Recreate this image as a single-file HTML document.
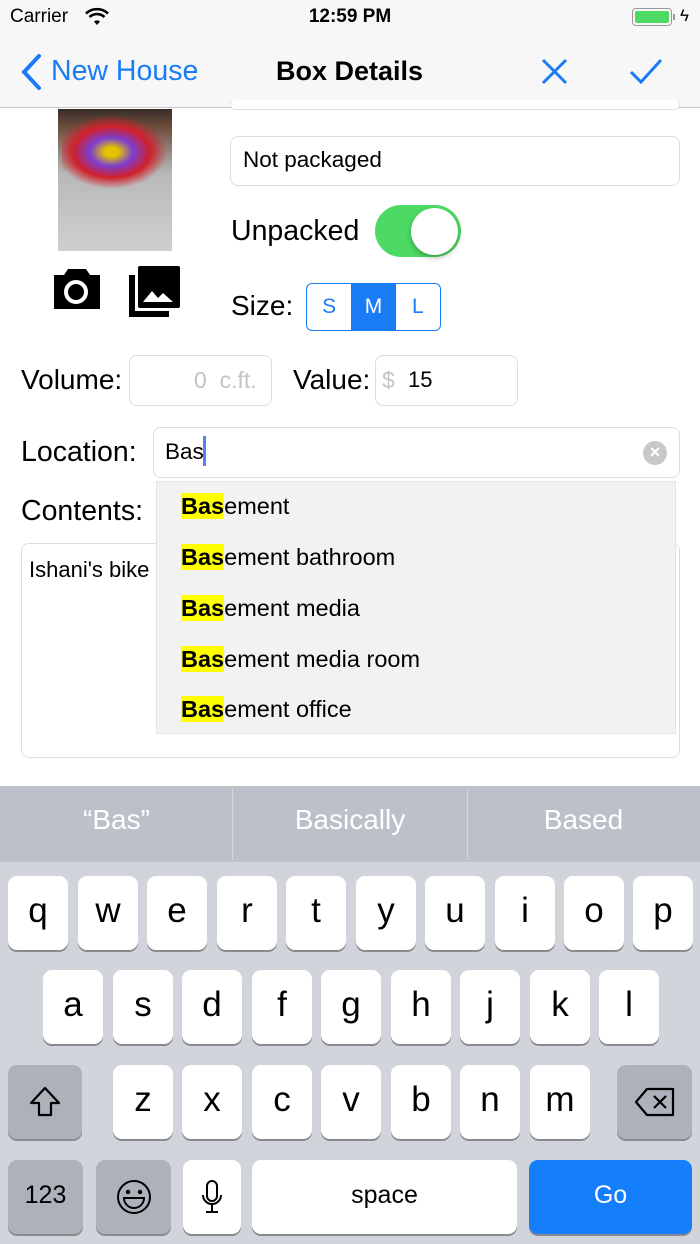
<!DOCTYPE html><html><head><style>
*{margin:0;padding:0;box-sizing:border-box}
body{width:700px;height:1244px;position:relative;overflow:hidden;background:#fff;font-family:"Liberation Sans",sans-serif;color:#000}
.a{position:absolute}
.f{position:absolute;border:1px solid #ddd;border-radius:8px;background:#fff}
.k{position:absolute;width:60px;height:74px;background:#fff;border-radius:9px;box-shadow:0 2px 0 #898a8d;font-size:35px;text-align:center;line-height:70px}
.g{background:#acb1ba}
.hl{background:#ff0;font-weight:bold}
.sg{position:absolute;left:181px;font-size:23.5px}
</style></head><body>
<div class="a" style="left:0;top:0;width:700px;height:108px;background:#f7f7f7;border-bottom:1px solid #c8c8cc"></div>
<div class="a" style="left:10px;top:6px;font-size:19px">Carrier</div>
<svg class="a" style="left:84px;top:7px" width="26" height="20" viewBox="0 0 26 20"><path d="M13 18l3-3.5a4.5 4.5 0 0 0-6 0z" fill="#000"/><path d="M5.5 10a11 11 0 0 1 15 0M2 6.5a16 16 0 0 1 22 0" stroke="#000" stroke-width="2.6" fill="none"/></svg>
<div class="a" style="left:0;width:700px;top:6px;text-align:center;font-size:19px;font-weight:bold">12:59 PM</div>
<div class="a" style="left:632px;top:8px;width:40px;height:18px;border:1.5px solid #999;border-radius:4px;padding:2px"><div style="background:#4cd964;height:100%;border-radius:2px"></div></div>
<div class="a" style="left:673px;top:14px;width:2px;height:6px;background:#999"></div>
<div class="a" style="left:680px;top:6px;font-size:17px">ϟ</div>
<svg class="a" style="left:20px;top:54px" width="24" height="36" viewBox="0 0 24 36"><path d="M19 2L4 18l15 16" stroke="#1a7cf5" stroke-width="4" fill="none" stroke-linecap="round"/></svg>
<div class="a" style="left:51px;top:55px;font-size:28.5px;color:#1a7cf5">New House</div>
<div class="a" style="left:276px;top:56px;font-size:27px;font-weight:bold">Box Details</div>
<svg class="a" style="left:541px;top:58px" width="27" height="27"><path d="M2 2l23 23M25 2L2 25" stroke="#1a7cf5" stroke-width="3"/></svg>
<svg class="a" style="left:629px;top:58px" width="34" height="26"><path d="M2 14l10 10L32 2" stroke="#1a7cf5" stroke-width="3" fill="none"/></svg>
<div class="f" style="left:230px;top:100px;width:450px;height:10px;border-top:none"></div>
<div class="a" style="left:58px;top:109px;width:114px;height:142px;background:linear-gradient(180deg,#3a2c28 0%,#6a4b3a 12%,#b8b8b8 45%,#cfcfcf 100%)"></div>
<div class="a" style="left:62px;top:112px;width:110px;height:80px;background:radial-gradient(ellipse at 45% 50%,#e2c300 8%,#7b3fd1 25%,#d0202a 45%,transparent 65%)"></div>
<svg class="a" style="left:50px;top:265px" width="54" height="48"><path d="M4 10h10l4-6h18l4 6h10v34H4z" fill="#000"/><circle cx="26" cy="27" r="10" fill="none" stroke="#fff" stroke-width="4"/></svg>
<svg class="a" style="left:128px;top:265px" width="54" height="53"><path d="M1 10v42h40v-6H7V10z" fill="#000"/><rect x="10" y="1" width="42" height="42" rx="2" fill="#000"/><path d="M15 37l9-11 6 7 5-5 10 9z" fill="#fff"/></svg>
<div class="f" style="left:230px;top:136px;width:450px;height:50px"></div>
<div class="a" style="left:243px;top:147px;font-size:22.5px">Not packaged</div>
<div class="a" style="left:231px;top:215px;font-size:28.5px">Unpacked</div>
<div class="a" style="left:375px;top:205px;width:86px;height:52px;border-radius:26px;background:#4cd964"></div>
<div class="a" style="left:411px;top:208px;width:47px;height:47px;border-radius:50%;background:#fff;box-shadow:0 3px 6px rgba(0,0,0,.25)"></div>
<div class="a" style="left:231px;top:290px;font-size:28px">Size:</div>
<div class="a" style="left:306px;top:283px;width:135px;height:48px;border:1.5px solid #1a7cf5;border-radius:6px;display:flex;overflow:hidden;color:#1a7cf5;font-size:21px;line-height:45px;text-align:center"><div style="flex:1">S</div><div style="flex:1;background:#1a7cf5;color:#fff">M</div><div style="flex:1">L</div></div>
<div class="a" style="left:21px;top:364px;font-size:28px">Volume:</div>
<div class="f" style="left:129px;top:355px;width:143px;height:51px"></div>
<div class="a" style="left:194px;top:367px;font-size:23px;color:#c4c4c8">0&nbsp; c.ft.</div>
<div class="a" style="left:293px;top:364px;font-size:28px">Value:</div>
<div class="f" style="left:375px;top:355px;width:143px;height:51px"></div>
<div class="a" style="left:382px;top:367px;font-size:23px;color:#c4c4c8">$</div>
<div class="a" style="left:408px;top:367px;font-size:22px">15</div>
<div class="a" style="left:21px;top:436px;font-size:28.5px">Location:</div>
<div class="f" style="left:153px;top:427px;width:527px;height:51px"></div>
<div class="a" style="left:165px;top:439px;font-size:22.5px">Bas</div>
<div class="a" style="left:203px;top:436px;width:3px;height:30px;background:#5a7ff0"></div>
<div class="a" style="left:643px;top:441px;width:24px;height:24px;border-radius:50%;background:#c7c7cc;color:#fff;font-size:18px;text-align:center;line-height:23px;font-weight:bold">×</div>
<div class="a" style="left:21px;top:495px;font-size:28.5px">Contents:</div>
<div class="f" style="left:21px;top:543px;width:659px;height:215px"></div>
<div class="a" style="left:29px;top:557px;font-size:22px">Ishani's bike <span style="color:#ccc">2</span></div>
<div class="a" style="left:156px;top:481px;width:520px;height:253px;background:#f2f2f2;border:1px solid #e4e4e4"></div>
<div class="sg" style="top:493px"><span class="hl">Bas</span>ement</div>
<div class="sg" style="top:544px"><span class="hl">Bas</span>ement bathroom</div>
<div class="sg" style="top:595px"><span class="hl">Bas</span>ement media</div>
<div class="sg" style="top:646px"><span class="hl">Bas</span>ement media room</div>
<div class="sg" style="top:696px"><span class="hl">Bas</span>ement office</div>
<div class="a" style="left:0;top:786px;width:700px;height:458px;background:#d1d4da"></div>
<div class="a" style="left:0;top:786px;width:700px;height:76px;background:#bcc0c8"></div>
<div class="a" style="left:232px;top:788px;width:1px;height:72px;background:#d6d8dc"></div>
<div class="a" style="left:467px;top:788px;width:1px;height:72px;background:#d6d8dc"></div>
<div class="a" style="left:0;width:233px;top:804px;text-align:center;font-size:28px;color:#fff">“Bas”</div>
<div class="a" style="left:233px;width:234px;top:804px;text-align:center;font-size:28px;color:#fff">Basically</div>
<div class="a" style="left:467px;width:233px;top:804px;text-align:center;font-size:28px;color:#fff">Based</div>
<div class="k" style="left:8px;top:876px">q</div><div class="k" style="left:78px;top:876px">w</div><div class="k" style="left:147px;top:876px">e</div><div class="k" style="left:217px;top:876px">r</div><div class="k" style="left:286px;top:876px">t</div><div class="k" style="left:356px;top:876px">y</div><div class="k" style="left:425px;top:876px">u</div><div class="k" style="left:495px;top:876px">i</div><div class="k" style="left:564px;top:876px">o</div><div class="k" style="left:633px;top:876px">p</div>
<div class="k" style="left:43px;top:970px">a</div><div class="k" style="left:113px;top:970px">s</div><div class="k" style="left:182px;top:970px">d</div><div class="k" style="left:252px;top:970px">f</div><div class="k" style="left:321px;top:970px">g</div><div class="k" style="left:391px;top:970px">h</div><div class="k" style="left:460px;top:970px">j</div><div class="k" style="left:530px;top:970px">k</div><div class="k" style="left:599px;top:970px">l</div>
<div class="k g" style="left:8px;top:1065px;width:74px"><svg width="34" height="34" style="margin-top:20px" viewBox="0 0 34 34"><path d="M17 3L3 18h8v12h12V18h8z" fill="none" stroke="#000" stroke-width="2.2" stroke-linejoin="round"/></svg></div>
<div class="k" style="left:113px;top:1065px">z</div><div class="k" style="left:182px;top:1065px">x</div><div class="k" style="left:252px;top:1065px">c</div><div class="k" style="left:321px;top:1065px">v</div><div class="k" style="left:391px;top:1065px">b</div><div class="k" style="left:460px;top:1065px">n</div><div class="k" style="left:530px;top:1065px">m</div>
<div class="k g" style="left:617px;top:1065px;width:75px"><svg width="42" height="30" style="margin-top:22px" viewBox="0 0 42 30"><path d="M13 2h26v26H13L2 15z" fill="none" stroke="#000" stroke-width="2.2" stroke-linejoin="round"/><path d="M20 9l12 12M32 9L20 21" stroke="#000" stroke-width="2.2"/></svg></div>
<div class="k g" style="left:8px;top:1160px;width:75px;font-size:25px">123</div>
<div class="k g" style="left:96px;top:1160px;width:75px"><svg width="36" height="36" style="margin-top:19px" viewBox="0 0 36 36"><circle cx="18" cy="18" r="16" fill="none" stroke="#000" stroke-width="2"/><circle cx="12" cy="13" r="2.2"/><circle cx="24" cy="13" r="2.2"/><path d="M8 19h20a10 10 0 0 1-20 0z" fill="none" stroke="#000" stroke-width="2"/></svg></div>
<div class="k" style="left:183px;top:1160px;width:58px"><svg width="22" height="36" style="margin-top:19px" viewBox="0 0 22 36"><rect x="6" y="2" width="10" height="20" rx="5" fill="none" stroke="#000" stroke-width="2"/><path d="M2 16a9 9 0 0 0 18 0M11 25v8M5 33h12" fill="none" stroke="#000" stroke-width="2"/></svg></div>
<div class="k" style="left:252px;top:1160px;width:265px;font-size:25px">space</div>
<div class="k" style="left:529px;top:1160px;width:163px;font-size:25px;background:#147efb;color:#fff">Go</div>
</body></html>
